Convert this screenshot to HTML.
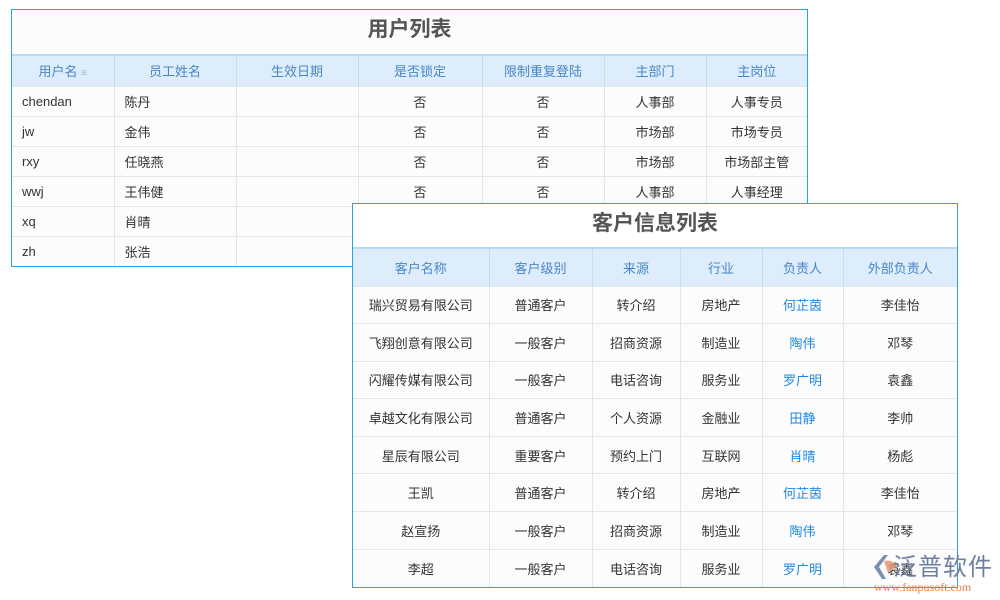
<!DOCTYPE html>
<html><head><meta charset="utf-8"><style>
*{margin:0;padding:0;box-sizing:border-box}
body{width:1000px;height:600px;background:#fff;position:relative;overflow:hidden;font-family:"Liberation Sans","Noto Sans CJK SC",sans-serif;font-size:13px;color:#333}
.box{position:absolute;border:1px solid #29a3e0;background:#fcfcfc}
.title{text-align:center;font-weight:bold;color:#555;font-size:21px;border-bottom:2px solid #b8d9f3}
table{border-collapse:collapse;table-layout:fixed;width:100%}
th{background:#ddedfb;color:#4a86c5;font-weight:normal;border-right:1px solid #c5dcef}
td{border-right:1px solid #e6e6e6;border-top:1px solid #e6e6e6;background:#fcfcfc}
th:last-child,td:last-child{border-right:none}
#t1 td{height:30px;padding-left:10px}
#t1 td.c{text-align:center;padding-left:0}
#t1 th{height:30px}
#t2 th{height:37px}
#t2 td{height:37.6px;text-align:center}
.b{color:#1e88e5}
</style></head><body>
<div class="box" style="left:11px;top:9px;width:797px;height:258px">
<div class="title" style="height:46px;line-height:40px">用户列表</div>
<table id="t1">
<colgroup><col style="width:102px"><col style="width:122px"><col style="width:122px"><col style="width:124px"><col style="width:122px"><col style="width:102px"><col></colgroup>
<tr><th>用户名 <span style="color:#9bbad6;font-size:10px">&#8801;</span></th><th>员工姓名</th><th>生效日期</th><th>是否锁定</th><th>限制重复登陆</th><th>主部门</th><th>主岗位</th></tr>
<tr><td>chendan</td><td>陈丹</td><td></td><td class="c">否</td><td class="c">否</td><td class="c">人事部</td><td class="c">人事专员</td></tr>
<tr><td>jw</td><td>金伟</td><td></td><td class="c">否</td><td class="c">否</td><td class="c">市场部</td><td class="c">市场专员</td></tr>
<tr><td>rxy</td><td>任晓燕</td><td></td><td class="c">否</td><td class="c">否</td><td class="c">市场部</td><td class="c">市场部主管</td></tr>
<tr><td>wwj</td><td>王伟健</td><td></td><td class="c">否</td><td class="c">否</td><td class="c">人事部</td><td class="c">人事经理</td></tr>
<tr><td>xq</td><td>肖晴</td><td></td><td class="c"></td><td class="c"></td><td class="c"></td><td class="c"></td></tr>
<tr><td>zh</td><td>张浩</td><td></td><td class="c"></td><td class="c"></td><td class="c"></td><td class="c"></td></tr>
</table></div>

<div class="box" style="left:352px;top:203px;width:606px;height:385px;background:#fff;overflow:hidden">
<div class="title" style="height:45px;line-height:40px">客户信息列表</div>
<table id="t2">
<colgroup><col style="width:136px"><col style="width:103px"><col style="width:88px"><col style="width:82px"><col style="width:81px"><col></colgroup>
<tr><th>客户名称</th><th>客户级别</th><th>来源</th><th>行业</th><th>负责人</th><th>外部负责人</th></tr>
<tr><td>瑞兴贸易有限公司</td><td>普通客户</td><td>转介绍</td><td>房地产</td><td class="b">何芷茵</td><td>李佳怡</td></tr>
<tr><td>飞翔创意有限公司</td><td>一般客户</td><td>招商资源</td><td>制造业</td><td class="b">陶伟</td><td>邓琴</td></tr>
<tr><td>闪耀传媒有限公司</td><td>一般客户</td><td>电话咨询</td><td>服务业</td><td class="b">罗广明</td><td>袁鑫</td></tr>
<tr><td>卓越文化有限公司</td><td>普通客户</td><td>个人资源</td><td>金融业</td><td class="b">田静</td><td>李帅</td></tr>
<tr><td>星辰有限公司</td><td>重要客户</td><td>预约上门</td><td>互联网</td><td class="b">肖晴</td><td>杨彪</td></tr>
<tr><td>王凯</td><td>普通客户</td><td>转介绍</td><td>房地产</td><td class="b">何芷茵</td><td>李佳怡</td></tr>
<tr><td>赵宣扬</td><td>一般客户</td><td>招商资源</td><td>制造业</td><td class="b">陶伟</td><td>邓琴</td></tr>
<tr><td>李超</td><td>一般客户</td><td>电话咨询</td><td>服务业</td><td class="b">罗广明</td><td>袁鑫</td></tr>
</table></div>

<svg style="position:absolute;left:870px;top:553px" width="30" height="28"><path d="M14 2 L4 14 L12 26 L16 26 L9 14 L18 2Z" fill="#7d8fb0"/><path d="M14 8 Q24 6 26 14 L18 20Z" fill="#e8906a" opacity=".8"/></svg>
<div style="position:absolute;left:893px;top:551px;font-size:24px;color:#6e7fa3;font-family:'Noto Sans CJK SC',sans-serif;letter-spacing:1px;line-height:28px">泛普软件</div>
<div style="position:absolute;left:874px;top:580px;font-size:12px;color:#e2805a;font-family:'Liberation Serif',serif;line-height:14px">www.fanpusoft.com</div>
</body></html>
